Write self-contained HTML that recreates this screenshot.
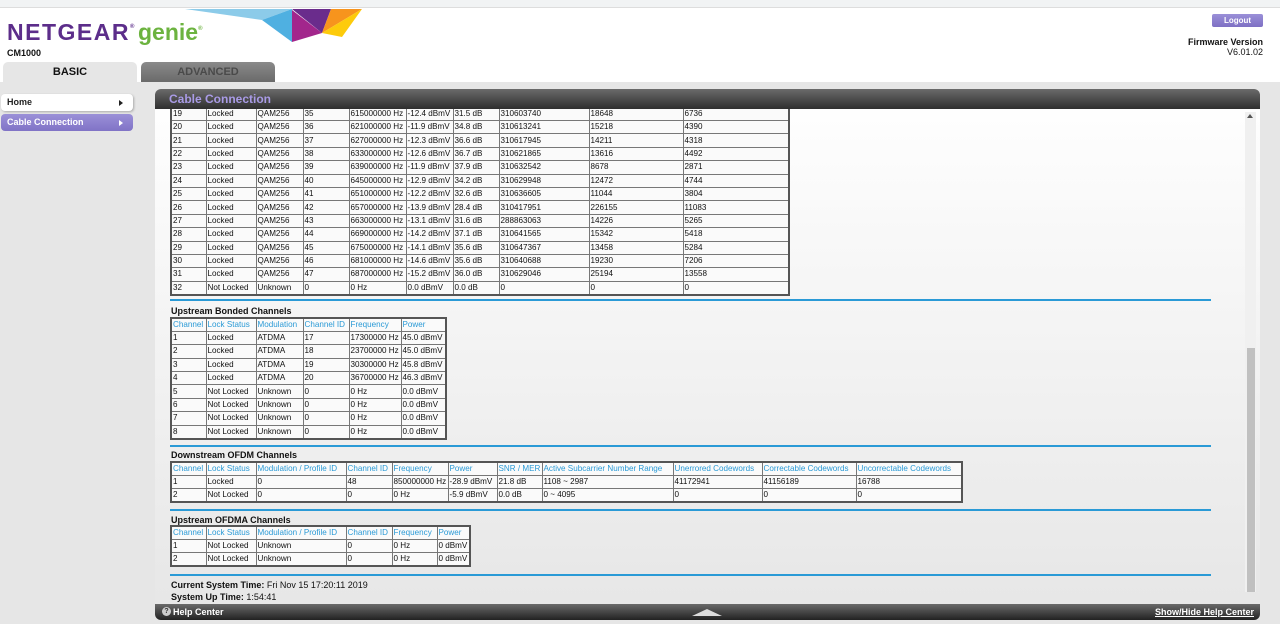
<!DOCTYPE html>
<html><head><meta charset="utf-8"><style>
*{margin:0;padding:0;box-sizing:border-box}
body{width:1280px;height:624px;overflow:hidden;background:#e6e6e6;font-family:"Liberation Sans",Arial,sans-serif;position:relative}
.abs{position:absolute}
#top{left:0;top:0;width:1280px;height:82px;background:#fff}
#chrome{left:0;top:0;width:1280px;height:8px;background:#f1f3f4;border-bottom:1px solid #ddd}
.logo{left:7px;top:19px;font-size:23px;font-weight:bold;color:#5c2d8a;letter-spacing:1.5px}
.genie{left:138px;top:19px;font-size:23px;font-weight:bold;color:#6cb33f}
.model{left:7px;top:48px;font-size:9px;font-weight:bold;color:#111}
.tab{top:62px;height:20px;border-radius:5px 5px 0 0;text-align:center;font-size:11px;font-weight:bold;line-height:20px}
.logout{left:1212px;top:14px;width:51px;height:13px;background:linear-gradient(#9a8fd8,#7e70c4);border-radius:2px;color:#fff;font-size:8px;font-weight:bold;text-align:center;line-height:13px}
.fw{right:17px;top:37px;font-size:9px;color:#111;text-align:right;line-height:10px}
.nav{left:1px;width:132px;height:17px;border-radius:4px;font-size:9px;font-weight:bold;line-height:17px;padding-left:6px}
.nav:after{content:"";position:absolute;right:10px;top:6px;border-left:4px solid;border-top:3px solid transparent;border-bottom:3px solid transparent}
#panel{left:155px;top:89px;width:1105px;height:531px;background:linear-gradient(#fff,#e6e6e6);border-radius:6px}
#hdr{left:155px;top:89px;width:1105px;height:20px;background:linear-gradient(#6a6a6a,#2e2e2e);border-radius:6px 6px 0 0;color:#a99be6;font-size:12px;font-weight:bold;line-height:20px;padding-left:14px}
#foot{left:155px;top:604px;width:1105px;height:16px;background:linear-gradient(#6a6a6a,#222);border-radius:0 0 6px 6px;color:#fff;font-size:9px;font-weight:bold;line-height:16px}
table{border-collapse:collapse;table-layout:fixed;font-size:8.1px;color:#111;position:absolute;border:2px solid #555;background:#fafafa}
td{border:1px solid #777;padding:0 1px;height:13.4px;line-height:12px;white-space:nowrap;overflow:hidden}
th{border:1px solid #777;padding:0 1px;height:13.4px;color:#2a9ad6;font-weight:normal;text-align:left;white-space:nowrap;overflow:hidden}
.line{left:170px;width:1041px;height:2px;background:#2a9ad6}
.ttl{left:171px;font-size:9px;font-weight:bold;color:#111}
</style></head><body>
<div id="top" class="abs"></div>
<div id="chrome" class="abs"></div>
<svg class="abs" style="left:180px;top:8px" width="190" height="40" viewBox="180 8 190 40">
<polygon points="185,9 292,9 262,20" fill="#8ccbe9"/>
<polygon points="262,20 292,9 292,42" fill="#4fb0e1"/>
<polygon points="292,10 322,33 292,42" fill="#a2268c"/>
<polygon points="292,9 331,9 322,33" fill="#6a2c8c"/>
<polygon points="331,9 362,9 322,33" fill="#f7941d"/>
<polygon points="322,33 362,9 342,37" fill="#fdcb0b"/>
</svg>
<div class="abs logo">NETGEAR<sup style="font-size:6px;vertical-align:12px">®</sup></div>
<div class="abs genie">genie<sup style="font-size:6px;vertical-align:10px">®</sup></div>
<div class="abs model">CM1000</div>
<div class="abs tab" style="left:3px;width:134px;background:#e6e6e6;color:#111">BASIC</div>
<div class="abs tab" style="left:141px;width:134px;background:linear-gradient(#8a8a8a,#6a6a6a);color:#4a4a4a">ADVANCED</div>
<div class="abs logout">Logout</div>
<div class="abs fw"><b>Firmware Version</b><br>V6.01.02</div>
<div class="abs nav" style="top:94px;background:#fff;color:#222;box-shadow:1px 1px 2px #aaa">Home</div>
<div class="abs nav" style="top:114px;background:linear-gradient(#9b90d8,#8073c6);color:#fff">Cable Connection</div>
<div id="panel" class="abs"></div>
<div class="abs" style="left:1245px;top:112px;width:11px;height:480px;background:#f0f0f0"></div>
<div class="abs" style="left:1247px;top:348px;width:8px;height:244px;background:#c0c0c0"></div>
<div class="abs" style="left:1247px;top:114px;border-bottom:4px solid #555;border-left:3px solid transparent;border-right:3px solid transparent"></div>
<div class="abs" style="left:155px;top:108px;width:1090px;height:188px;overflow:hidden">
<table style="left:15px;top:-2px;width:618px">
<colgroup><col style="width:35px"><col style="width:50px"><col style="width:47px"><col style="width:46px"><col style="width:57px"><col style="width:47px"><col style="width:46px"><col style="width:90px"><col style="width:94px"><col style="width:106px"></colgroup>
<tr><td>19</td><td>Locked</td><td>QAM256</td><td>35</td><td>615000000 Hz</td><td>-12.4 dBmV</td><td>31.5 dB</td><td>310603740</td><td>18648</td><td>6736</td></tr>
<tr><td>20</td><td>Locked</td><td>QAM256</td><td>36</td><td>621000000 Hz</td><td>-11.9 dBmV</td><td>34.8 dB</td><td>310613241</td><td>15218</td><td>4390</td></tr>
<tr><td>21</td><td>Locked</td><td>QAM256</td><td>37</td><td>627000000 Hz</td><td>-12.3 dBmV</td><td>36.6 dB</td><td>310617945</td><td>14211</td><td>4318</td></tr>
<tr><td>22</td><td>Locked</td><td>QAM256</td><td>38</td><td>633000000 Hz</td><td>-12.6 dBmV</td><td>36.7 dB</td><td>310621865</td><td>13616</td><td>4492</td></tr>
<tr><td>23</td><td>Locked</td><td>QAM256</td><td>39</td><td>639000000 Hz</td><td>-11.9 dBmV</td><td>37.9 dB</td><td>310632542</td><td>8678</td><td>2871</td></tr>
<tr><td>24</td><td>Locked</td><td>QAM256</td><td>40</td><td>645000000 Hz</td><td>-12.9 dBmV</td><td>34.2 dB</td><td>310629948</td><td>12472</td><td>4744</td></tr>
<tr><td>25</td><td>Locked</td><td>QAM256</td><td>41</td><td>651000000 Hz</td><td>-12.2 dBmV</td><td>32.6 dB</td><td>310636605</td><td>11044</td><td>3804</td></tr>
<tr><td>26</td><td>Locked</td><td>QAM256</td><td>42</td><td>657000000 Hz</td><td>-13.9 dBmV</td><td>28.4 dB</td><td>310417951</td><td>226155</td><td>11083</td></tr>
<tr><td>27</td><td>Locked</td><td>QAM256</td><td>43</td><td>663000000 Hz</td><td>-13.1 dBmV</td><td>31.6 dB</td><td>288863063</td><td>14226</td><td>5265</td></tr>
<tr><td>28</td><td>Locked</td><td>QAM256</td><td>44</td><td>669000000 Hz</td><td>-14.2 dBmV</td><td>37.1 dB</td><td>310641565</td><td>15342</td><td>5418</td></tr>
<tr><td>29</td><td>Locked</td><td>QAM256</td><td>45</td><td>675000000 Hz</td><td>-14.1 dBmV</td><td>35.6 dB</td><td>310647367</td><td>13458</td><td>5284</td></tr>
<tr><td>30</td><td>Locked</td><td>QAM256</td><td>46</td><td>681000000 Hz</td><td>-14.6 dBmV</td><td>35.6 dB</td><td>310640688</td><td>19230</td><td>7206</td></tr>
<tr><td>31</td><td>Locked</td><td>QAM256</td><td>47</td><td>687000000 Hz</td><td>-15.2 dBmV</td><td>36.0 dB</td><td>310629046</td><td>25194</td><td>13558</td></tr>
<tr><td>32</td><td>Not Locked</td><td>Unknown</td><td>0</td><td>0 Hz</td><td>0.0 dBmV</td><td>0.0 dB</td><td>0</td><td>0</td><td>0</td></tr>
</table></div>
<div class="abs line" style="top:299px"></div>
<div class="abs ttl" style="top:306px">Upstream Bonded Channels</div>
<table style="left:170px;top:317px;width:277px">
<colgroup><col style="width:35px"><col style="width:50px"><col style="width:47px"><col style="width:46px"><col style="width:52px"><col style="width:45px"></colgroup>
<tr><th>Channel</th><th>Lock Status</th><th>Modulation</th><th>Channel ID</th><th>Frequency</th><th>Power</th></tr>
<tr><td>1</td><td>Locked</td><td>ATDMA</td><td>17</td><td>17300000 Hz</td><td>45.0 dBmV</td></tr>
<tr><td>2</td><td>Locked</td><td>ATDMA</td><td>18</td><td>23700000 Hz</td><td>45.0 dBmV</td></tr>
<tr><td>3</td><td>Locked</td><td>ATDMA</td><td>19</td><td>30300000 Hz</td><td>45.8 dBmV</td></tr>
<tr><td>4</td><td>Locked</td><td>ATDMA</td><td>20</td><td>36700000 Hz</td><td>46.3 dBmV</td></tr>
<tr><td>5</td><td>Not Locked</td><td>Unknown</td><td>0</td><td>0 Hz</td><td>0.0 dBmV</td></tr>
<tr><td>6</td><td>Not Locked</td><td>Unknown</td><td>0</td><td>0 Hz</td><td>0.0 dBmV</td></tr>
<tr><td>7</td><td>Not Locked</td><td>Unknown</td><td>0</td><td>0 Hz</td><td>0.0 dBmV</td></tr>
<tr><td>8</td><td>Not Locked</td><td>Unknown</td><td>0</td><td>0 Hz</td><td>0.0 dBmV</td></tr>
</table>
<div class="abs line" style="top:445px"></div>
<div class="abs ttl" style="top:450px">Downstream OFDM Channels</div>
<table style="left:170px;top:461px;width:793px">
<colgroup><col style="width:35px"><col style="width:50px"><col style="width:90px"><col style="width:46px"><col style="width:56px"><col style="width:49px"><col style="width:45px"><col style="width:131px"><col style="width:89px"><col style="width:94px"><col style="width:106px"></colgroup>
<tr><th>Channel</th><th>Lock Status</th><th>Modulation / Profile ID</th><th>Channel ID</th><th>Frequency</th><th>Power</th><th>SNR / MER</th><th>Active Subcarrier Number Range</th><th>Unerrored Codewords</th><th>Correctable Codewords</th><th>Uncorrectable Codewords</th></tr>
<tr><td>1</td><td>Locked</td><td>0</td><td>48</td><td>850000000 Hz</td><td>-28.9 dBmV</td><td>21.8 dB</td><td>1108 ~ 2987</td><td>41172941</td><td>41156189</td><td>16788</td></tr>
<tr><td>2</td><td>Not Locked</td><td>0</td><td>0</td><td>0 Hz</td><td>-5.9 dBmV</td><td>0.0 dB</td><td>0 ~ 4095</td><td>0</td><td>0</td><td>0</td></tr>
</table>
<div class="abs line" style="top:509px"></div>
<div class="abs ttl" style="top:515px">Upstream OFDMA Channels</div>
<table style="left:170px;top:525px;width:301px">
<colgroup><col style="width:35px"><col style="width:50px"><col style="width:90px"><col style="width:46px"><col style="width:45px"><col style="width:33px"></colgroup>
<tr><th>Channel</th><th>Lock Status</th><th>Modulation / Profile ID</th><th>Channel ID</th><th>Frequency</th><th>Power</th></tr>
<tr><td>1</td><td>Not Locked</td><td>Unknown</td><td>0</td><td>0 Hz</td><td>0 dBmV</td></tr>
<tr><td>2</td><td>Not Locked</td><td>Unknown</td><td>0</td><td>0 Hz</td><td>0 dBmV</td></tr>
</table>
<div class="abs line" style="top:574px"></div>
<div class="abs" style="left:171px;top:579px;font-size:9px;color:#111;line-height:12px"><b>Current System Time:</b> Fri Nov 15 17:20:11 2019<br><b>System Up Time:</b> 1:54:41</div>
<div id="hdr" class="abs">Cable Connection</div>
<div id="foot" class="abs">
<span style="position:absolute;left:7px;top:3px;width:9px;height:9px;border-radius:50%;background:#ccc;color:#333;font-size:7px;line-height:9px;text-align:center">?</span>
<span style="position:absolute;left:18px">Help Center</span>
<span style="position:absolute;left:537px;top:5px;border-bottom:7px solid #ddd;border-left:15px solid transparent;border-right:15px solid transparent"></span>
<span style="position:absolute;right:6px;text-decoration:underline">Show/Hide Help Center</span>
</div>
</body></html>
